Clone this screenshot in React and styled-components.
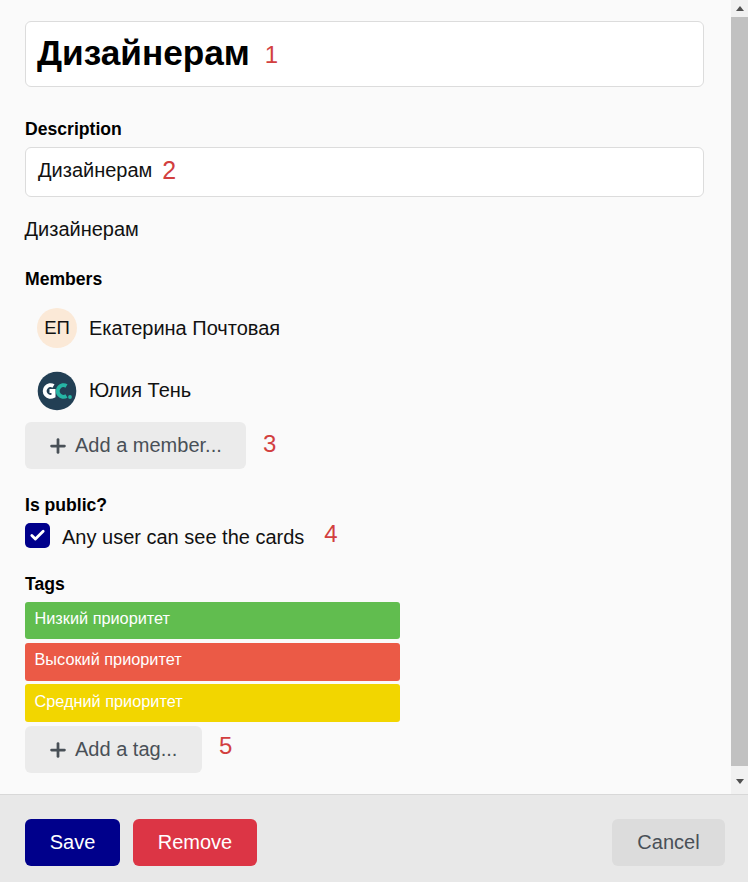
import React from 'react'
import styled, { createGlobalStyle } from 'styled-components'
import { Plus, Check } from 'lucide-react'

const GlobalStyle = createGlobalStyle`
  html, body {
    margin: 0;
    padding: 0;
    height: 100%;
    overflow: hidden;
  }
  body {
    font-family: "Liberation Sans", Arial, sans-serif;
    color: #111;
    background: #fafafa;
  }
`
const Page = styled.div`
  width: 748px;
  height: 882px;
  display: flex;
  flex-direction: column;
`
const Body = styled.div`
  height: 794px;
  display: flex;
`
const Content = styled.div`
  flex: 1;
  padding: 21px 27px 0 25px;
  background: #fafafa;
`
const Scrollbar = styled.div`
  width: 17px;
  background: #f1f1f1;
  display: flex;
  flex-direction: column;
  padding-bottom: 4px;
`
const ScrollArrow = styled.div`
  height: 17px;
  display: flex;
  align-items: center;
  justify-content: center;
  ${p => p.$down && 'margin-top: auto;'}
  &::before {
    content: '';
    border-left: 4.5px solid transparent;
    border-right: 4.5px solid transparent;
    ${p => p.$down ? 'border-top: 5px solid #505050;' : 'border-bottom: 5px solid #505050;'}
  }
`
const ScrollThumb = styled.div`
  height: 749px;
  background: #c1c1c1;
`
const TitleBox = styled.div`
  height: 66px;
  box-sizing: border-box;
  border: 1px solid #dcdcdc;
  border-radius: 6px;
  background: #fff;
  padding: 0 12px 3px 11px;
  display: flex;
  align-items: center;
  font-size: 35.2px;
  font-weight: 700;
  color: #000;
`
const Note = styled.span`
  color: #d23f3f;
  font-weight: 400;
  font-size: ${p => p.$size || 24}px;
  margin-left: ${p => p.$gap || 10}px;
  margin-top: ${p => p.$down || 0}px;
  margin-bottom: ${p => p.$up || 0}px;
`
const Label = styled.div`
  font-size: 17.6px;
  font-weight: 700;
  line-height: 20px;
  color: #000;
  margin-top: ${p => p.$top}px;
`
const DescBox = styled.div`
  height: 50px;
  box-sizing: border-box;
  border: 1px solid #dcdcdc;
  border-radius: 6px;
  background: #fff;
  margin-top: 8px;
  padding: 0 12px 3px 12px;
  display: flex;
  align-items: center;
  font-size: 20px;
`
const Plain = styled.div`
  font-size: 20px;
  line-height: 24px;
  margin-top: 20px;
  margin-left: -0.5px;
`
const MemberList = styled.div`
  margin: 8px 0 1px;
`
const Member = styled.div`
  display: flex;
  align-items: center;
  gap: 12px;
  height: 62px;
  padding-left: 12px;
  font-size: 20px;
`
const Avatar = styled.div`
  width: 40px;
  height: 40px;
  border-radius: 50%;
  background: #fbe9d7;
  display: flex;
  align-items: center;
  justify-content: center;
  font-size: 18.5px;
`
const LogoSlot = styled.div`
  width: 40px;
  height: 40px;
  margin-top: 2px;
`
const Row = styled.div`
  display: flex;
  align-items: center;
`
const AddButton = styled.button`
  height: 47px;
  width: ${p => p.$width}px;
  border: none;
  border-radius: 6px;
  background: #ebebeb;
  color: #495057;
  font: inherit;
  font-size: 20px;
  display: flex;
  align-items: center;
  justify-content: flex-start;
  gap: 6px;
  padding: 0 0 0 22px;
`
const CheckRow = styled.div`
  display: flex;
  align-items: center;
  margin-top: 8px;
  font-size: 20px;
  height: 25px;
`
const CheckText = styled.span`
  padding-top: 4px;
`
const CheckBox = styled.div`
  width: 25px;
  height: 25px;
  border-radius: 5px;
  background: #00008b;
  color: #fff;
  display: flex;
  align-items: center;
  justify-content: center;
  margin-right: 12px;
`
const TagList = styled.div`
  width: 375px;
  margin: 8px 0 4px;
  display: flex;
  flex-direction: column;
  gap: 3px;
`
const Tag = styled.div`
  height: 38px;
  box-sizing: border-box;
  border-radius: 3px;
  padding: 7px 10px 0 9.5px;
  background: ${p => p.$color};
  color: #fff;
  font-size: 16.3px;
  line-height: 18px;
  &:first-child {
    height: 37px;
    margin-bottom: 1px;
  }
  &:last-child {
    padding-top: 8px;
  }
`
const Footer = styled.div`
  height: 88px;
  box-sizing: border-box;
  border-top: 1px solid #d8d8d8;
  background: #e8e8e8;
  padding: 24px 23px 0 25px;
  display: flex;
  gap: 13px;
`
const FooterButton = styled.button`
  height: 47px;
  width: ${p => p.$width}px;
  border: none;
  border-radius: 6px;
  background: ${p => p.$bg};
  color: ${p => p.$color || '#fff'};
  font: inherit;
  font-size: 20px;
  padding: 0;
  ${p => p.$push && 'margin-left: auto;'}
`

const GcLogo = () => (
  <svg width="40" height="40" viewBox="0 0 40 40">
    <circle cx="20" cy="20" r="19.300" fill="#223f54" />
    <path d="M16.500 15a5.800 5.800 0 1 0 0 10v-5h-4" fill="none" stroke="#fff" strokeWidth="4" />
    <path d="M29.500 15a5.800 5.800 0 1 0 0 10" fill="none" stroke="#26b5a4" strokeWidth="4" />
    <circle cx="33" cy="26" r="1.900" fill="#26b5a4" />
  </svg>
)

export default function App() {
  return (
    <Page>
      <GlobalStyle />
      <Body>
        <Content>
          <TitleBox>
            Дизайнерам<Note $gap={15} $down={4}>1</Note>
          </TitleBox>
          <Label $top={32}>Description</Label>
          <DescBox>
            Дизайнерам<Note $size={25}>2</Note>
          </DescBox>
          <Plain>Дизайнерам</Plain>
          <Label $top={28}>Members</Label>
          <MemberList>
            <Member>
              <Avatar>ЕП</Avatar>
              Екатерина Почтовая
            </Member>
            <Member>
              <LogoSlot>
                <GcLogo />
              </LogoSlot>
              Юлия Тень
            </Member>
          </MemberList>
          <Row>
            <AddButton $width={221}>
              <Plus size={22} strokeWidth={3} />
              Add a member...
            </AddButton>
            <Note $gap={17} $up={4}>3</Note>
          </Row>
          <Label $top={26}>Is public?</Label>
          <CheckRow>
            <CheckBox>
              <Check size={17} strokeWidth={4} />
            </CheckBox>
            <CheckText>Any user can see the cards</CheckText>
            <Note $gap={20} $up={4}>4</Note>
          </CheckRow>
          <Label $top={26}>Tags</Label>
          <TagList>
            <Tag $color="#61bd4f">Низкий приоритет</Tag>
            <Tag $color="#eb5a46">Высокий приоритет</Tag>
            <Tag $color="#f2d600">Средний приоритет</Tag>
          </TagList>
          <Row>
            <AddButton $width={177}>
              <Plus size={22} strokeWidth={3} />
              Add a tag...
            </AddButton>
            <Note $gap={17} $up={8}>5</Note>
          </Row>
        </Content>
        <Scrollbar>
          <ScrollArrow />
          <ScrollThumb />
          <ScrollArrow $down />
        </Scrollbar>
      </Body>
      <Footer>
        <FooterButton $width={95} $bg="#00008b">Save</FooterButton>
        <FooterButton $width={124} $bg="#dc3545">Remove</FooterButton>
        <FooterButton $width={113} $bg="#dcdcdc" $color="#495057" $push>Cancel</FooterButton>
      </Footer>
    </Page>
  )
}
